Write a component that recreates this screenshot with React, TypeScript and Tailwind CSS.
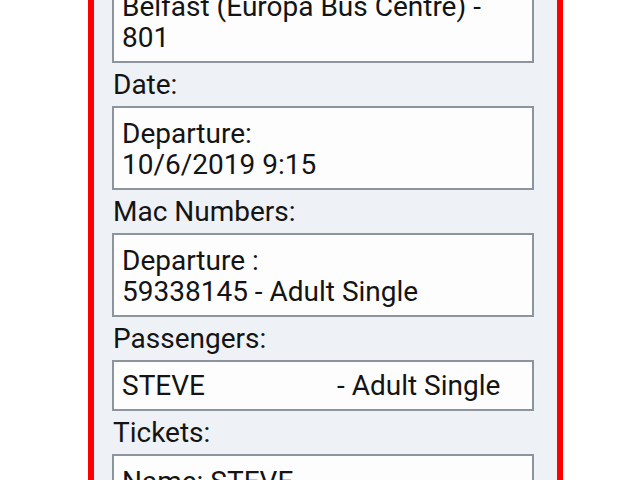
import React from "react";

function Box({ children, single }: { children: React.ReactNode; single?: boolean }) {
  return (
    <div
      className={
        "w-[422px] border-2 border-[#8c959d] bg-[#fdfdfd] px-[8px] " +
        (single ? "pt-[8px] pb-[8px]" : "pt-[10px] pb-[8px]")
      }
    >
      {children}
    </div>
  );
}

function Label({ children }: { children: React.ReactNode }) {
  return <div className="pt-[6px] pb-[6px] pl-[1px]">{children}</div>;
}

export default function App() {
  return (
    <div className="h-[480px] w-[640px] overflow-hidden bg-white font-['Roboto','Noto_Sans',sans-serif] text-[28px] leading-[31px] text-[#141414]">
      <div className="-mt-[21px] ml-[88px] w-[475px] border-x-[6px] border-[#ff0000] bg-[#eef1f6] pl-[18px] pb-[40px]">
        <Box>
          <div>Belfast (Europa Bus Centre) -</div>
          <div>801</div>
        </Box>
        <Label>Date:</Label>
        <Box>
          <div>Departure:</div>
          <div>10/6/2019 9:15</div>
        </Box>
        <Label>Mac Numbers:</Label>
        <Box>
          <div>Departure :</div>
          <div>59338145 - Adult Single</div>
        </Box>
        <Label>Passengers:</Label>
        <Box single>
          <div className="whitespace-pre">{"STEVE                   - Adult Single"}</div>
        </Box>
        <Label>Tickets:</Label>
        <Box>
          <div>Name: STEVE</div>
          <div>Adult Single</div>
        </Box>
      </div>
    </div>
  );
}
